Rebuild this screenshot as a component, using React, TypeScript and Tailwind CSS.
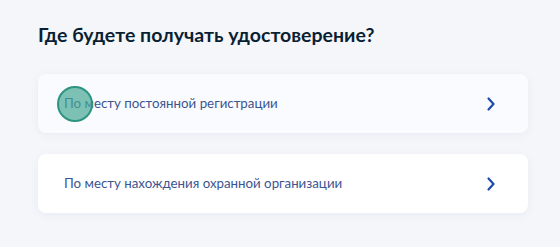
import React from "react";

function Chevron() {
  return (
    <svg width="10" height="16" viewBox="0 0 10 16" fill="none">
      <path d="M2.5 2.5 L7.5 8 L2.5 13.5" stroke="#1d4aa8" strokeWidth="2.2" strokeLinecap="round" strokeLinejoin="round" />
    </svg>
  );
}

function Card({ text, tinted, children }: { text: string; tinted?: boolean; children?: React.ReactNode }) {
  return (
    <div
      className={`relative flex h-[59px] items-center justify-between rounded-lg pl-[26px] pr-[32px] shadow-[0_2px_8px_rgba(100,120,160,0.08)] ${
        tinted ? "bg-[#fafbfe]" : "bg-white"
      }`}
    >
      <span className="text-[13.3px] text-[#3b5591]">{text}</span>
      <Chevron />
      {children}
    </div>
  );
}

export default function App() {
  return (
    <div className="h-[247px] w-[560px] bg-[#f4f6fa] pl-[38px] pr-[32px] pt-[22px]" style={{ fontFamily: "Lato, 'Noto Sans', sans-serif" }}>
      <h1 className="text-[19.5px] font-bold leading-[26px] text-[#0b1f33]">Где будете получать удостоверение?</h1>
      <div className="mt-[26px] flex flex-col gap-[21px]">
        <Card text="По месту постоянной регистрации" tinted>
          <div className="absolute left-[19px] top-[12px] h-[36px] w-[36px] rounded-full border-2 border-[#2e9482] bg-[rgba(70,168,148,0.7)]" />
        </Card>
        <Card text="По месту нахождения охранной организации" />
      </div>
    </div>
  );
}
